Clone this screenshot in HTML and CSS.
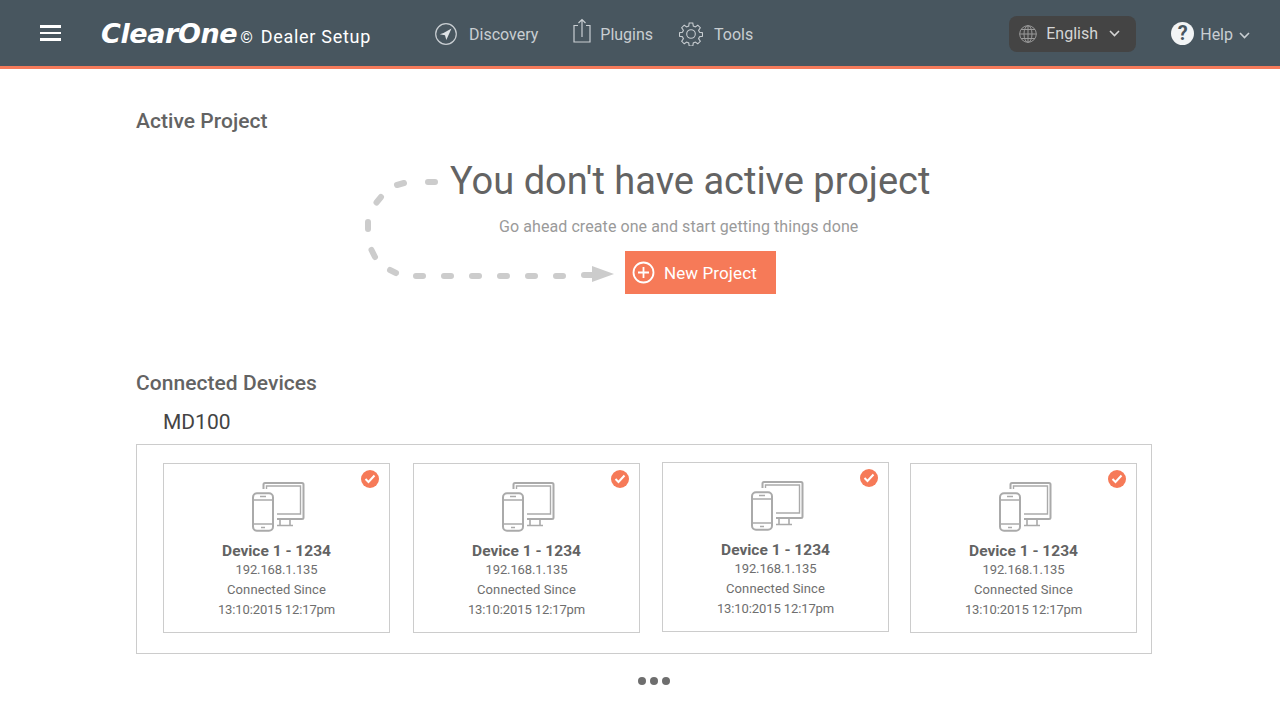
FILE: index.html
```html
<!DOCTYPE html>
<html lang="en">
<head>
<meta charset="utf-8">
<title>ClearOne Dealer Setup</title>
<link rel="stylesheet" href="styles.css">
</head>
<body>
<svg class="defs" width="0" height="0" aria-hidden="true">
  <symbol id="device" viewBox="0 0 56 52">
    <g fill="none" stroke="#aaa" stroke-width="2">
      <path d="M13.500 8V3.500a1.500 1.500 0 0 1 1.500-1.500h37a1.500 1.500 0 0 1 1.500 1.500v33a1.500 1.500 0 0 1-1.500 1.500H27"/>
      <path d="M16.500 8V5h34v28H27" stroke-width="1.400"/>
      <path d="M30 38v6M40 38v6M27 44.500h16" stroke-width="1.600"/>
      <rect x="3" y="12.200" width="20" height="37.500" rx="4"/>
      <path d="M3 19h20M3 43h20" stroke-width="1.400"/>
      <path d="M10 15.500h6M11 46.500h4" stroke-width="1.400"/>
    </g>
  </symbol>
</svg>

<header class="topbar">
  <button class="menu" type="button" aria-label="Menu"><span></span><span></span><span></span></button>
  <div class="brand"><span class="logo">ClearOne</span><span class="copy">©</span><span class="product">Dealer Setup</span></div>
  <nav class="nav">
    <a class="nav-item nav-discovery">
      <svg width="24" height="24" viewBox="0 0 24 24"><circle cx="12" cy="12" r="10.300" fill="none" stroke="#c9ced2" stroke-width="1.200"/><path d="M17.500 6.500 9.500 11 5.800 12.200 11 13.200 12.300 18z" fill="#dfe3e6"/></svg>
      <span>Discovery</span>
    </a>
    <a class="nav-item nav-plugins">
      <svg width="18" height="26" viewBox="0 0 18 26"><path d="M5 7.500H1V24h16V7.500h-4" fill="none" stroke="#c9ced2" stroke-width="1.200"/><path d="M9 1.500V19M5.500 5 9 1.500 12.500 5" fill="none" stroke="#c9ced2" stroke-width="1.200"/></svg>
      <span>Plugins</span>
    </a>
    <a class="nav-item nav-tools">
      <svg width="24" height="24" viewBox="0 0 24 24"><g fill="none" stroke="#c9ced2" stroke-width="1.100"><circle cx="12" cy="12" r="4.300"/><path d="M10.200 1h3.600l.5 3 2 .9 2.500-1.700 2.500 2.500-1.700 2.500.9 2 3 .5v3.600l-3 .5-.9 2 1.700 2.500-2.500 2.500-2.500-1.700-2 .9-.5 3h-3.600l-.5-3-2-.9-2.500 1.700-2.500-2.500 1.700-2.500-.9-2-3-.5v-3.600l3-.5.9-2-1.700-2.500 2.500-2.500 2.500 1.700 2-.9z"/></g></svg>
      <span>Tools</span>
    </a>
  </nav>
  <div class="lang">
    <svg width="18" height="18" viewBox="0 0 18 18"><g fill="none" stroke="#9a9a9a" stroke-width="1"><circle cx="9" cy="9" r="8.300"/><ellipse cx="9" cy="9" rx="4" ry="8.300"/><path d="M9 .7v16.600M.7 9h16.600M2 4.500h14M2 13.500h14"/></g></svg>
    <span>English</span>
    <svg width="11" height="7" viewBox="0 0 11 7"><path d="M1 1l4.500 4.500L10 1" fill="none" stroke="#d5d5d5" stroke-width="1.600"/></svg>
  </div>
  <div class="help">
    <span class="help-mark">?</span>
    <span class="help-label">Help</span>
    <svg width="11" height="7" viewBox="0 0 11 7"><path d="M1 1l4.500 4.500L10 1" fill="none" stroke="#c9ced2" stroke-width="1.600"/></svg>
  </div>
</header>

<main class="page">
  <h2 class="section-title">Active Project</h2>
  <section class="hero">
    <svg class="hero-arrow" width="260" height="120" viewBox="0 0 260 120">
      <g fill="none" stroke="#ccc" stroke-width="6" stroke-linecap="round">
        <path d="M68 11h7"/>
        <path d="M37 14 44 12"/>
        <path d="M16.500 31.500 21 26"/>
        <path d="M8 51v7"/>
        <path d="M11.500 79 15 86"/>
        <path d="M30 99 36 102"/>
        <path d="M56 105h7M84 105h7M112 105h7M140 105h7M168 105h7M196 105h7M224 104h8"/>
      </g>
      <path d="M232 95 254 103 232 111z" fill="#ccc"/>
    </svg>
    <h1 class="hero-title">You don't have active project</h1>
    <p class="hero-sub">Go ahead create one and start getting things done</p>
    <button class="new-project" type="button">
      <svg width="23" height="23" viewBox="0 0 23 23"><circle cx="11.500" cy="11.500" r="10" fill="none" stroke="#fff" stroke-width="1.800"/><path d="M11.500 6v11M6 11.500h11" stroke="#fff" stroke-width="1.800"/></svg>
      <span>New Project</span>
    </button>
  </section>

  <h2 class="section-title section-devices">Connected Devices</h2>
  <h3 class="group-title">MD100</h3>
  <section class="device-box">
    <article class="card">
      <span class="badge"><svg width="12" height="10" viewBox="0 0 12 10"><path d="M1.500 5 4.500 8 10.500 1.500" fill="none" stroke="#fff" stroke-width="2"/></svg></span>
      <svg class="device-icon" width="56" height="52"><use href="#device"/></svg>
      <strong>Device 1 - 1234</strong>
      <p class="tight">192.168.1.135</p>
      <p class="wide">Connected Since</p>
      <p class="tight">13:10:2015 12:17pm</p>
    </article>
    <article class="card card-2">
      <span class="badge"><svg width="12" height="10" viewBox="0 0 12 10"><path d="M1.500 5 4.500 8 10.500 1.500" fill="none" stroke="#fff" stroke-width="2"/></svg></span>
      <svg class="device-icon" width="56" height="52"><use href="#device"/></svg>
      <strong>Device 1 - 1234</strong>
      <p class="tight">192.168.1.135</p>
      <p class="wide">Connected Since</p>
      <p class="tight">13:10:2015 12:17pm</p>
    </article>
    <article class="card card-3">
      <span class="badge"><svg width="12" height="10" viewBox="0 0 12 10"><path d="M1.500 5 4.500 8 10.500 1.500" fill="none" stroke="#fff" stroke-width="2"/></svg></span>
      <svg class="device-icon" width="56" height="52"><use href="#device"/></svg>
      <strong>Device 1 - 1234</strong>
      <p class="tight">192.168.1.135</p>
      <p class="wide">Connected Since</p>
      <p class="tight">13:10:2015 12:17pm</p>
    </article>
    <article class="card card-4">
      <span class="badge"><svg width="12" height="10" viewBox="0 0 12 10"><path d="M1.500 5 4.500 8 10.500 1.500" fill="none" stroke="#fff" stroke-width="2"/></svg></span>
      <svg class="device-icon" width="56" height="52"><use href="#device"/></svg>
      <strong>Device 1 - 1234</strong>
      <p class="tight">192.168.1.135</p>
      <p class="wide">Connected Since</p>
      <p class="tight">13:10:2015 12:17pm</p>
    </article>
  </section>
  <div class="pager"><span></span><span></span><span></span></div>
</main>
</body>
</html>
```
FILE: styles.css
```css
* { box-sizing: border-box; }
html, body { margin: 0; padding: 0; height: 100%; overflow: hidden; background: #fff; }
body { font-family: Roboto, "Liberation Sans", sans-serif; color: #636363; }
.defs { display: block; height: 0; }

.topbar {
  display: flex;
  align-items: center;
  height: 69px;
  padding: 1px 0 0 40px;
  background: #48565f;
  border-bottom: 3px solid #f67a5a;
  color: #c9ced2;
  font-size: 16px;
}
.menu {
  display: flex;
  flex-direction: column;
  gap: 4px;
  width: 21px;
  margin-top: -1px;
  padding: 0;
  border: 0;
  background: none;
}
.menu span { display: block; height: 2.5px; background: #fff; }
.brand { display: flex; align-items: baseline; margin-left: 40px; width: 333px; color: #fff; }
.logo { font: italic bold 27px "DejaVu Sans", sans-serif; letter-spacing: -0.4px; }
.copy { margin-left: 3px; font-size: 16px; }
.product { margin-left: 8px; font-size: 18px; letter-spacing: 0.7px; }
.nav { display: flex; align-items: center; }
.nav-item { display: flex; align-items: center; }
.nav-item span { padding-top: 2px; }
.nav-discovery svg { margin-right: 11px; }
.nav-plugins { margin-left: 35px; }
.nav-plugins svg { margin: -6px 9px 0 0; }
.nav-tools { margin-left: 26px; }
.nav-tools svg { margin-right: 11px; }
.lang {
  display: flex;
  align-items: center;
  width: 127px;
  height: 36px;
  margin-left: auto;
  padding-left: 10px;
  border-radius: 8px;
  background: #444;
  color: #d5d5d5;
}
.lang span { margin: 0 11px 0 9px; }
.help { display: flex; align-items: center; margin: -1px 30px 0 35px; color: #c9ced2; }
.help-mark {
  display: flex;
  align-items: center;
  justify-content: center;
  width: 23px;
  height: 23px;
  margin-right: 6px;
  border-radius: 50%;
  background: #f2f4f5;
  color: #48565f;
  font-size: 20px;
  font-weight: 700;
}
.help-label { padding-top: 2px; }
.help svg { margin: 5px 0 0 6px; }

.page { display: flex; flex-direction: column; padding: 0 128px 0 136px; }
.section-title { margin: 40px 0 0; font-size: 21px; line-height: 24px; font-weight: 500; letter-spacing: 0.05px; color: #636363; }
.hero { position: relative; height: 238px; }
.hero-arrow { position: absolute; left: 224px; top: 38px; }
.hero-title { margin: 23px 0 0 314px; font-size: 38px; line-height: 50px; font-weight: 400; color: #636363; white-space: nowrap; }
.hero-sub { margin: 10px 0 0 363px; font-size: 16px; line-height: 22px; letter-spacing: 0.08px; color: #9a9a9a; }
.new-project {
  display: flex;
  align-items: center;
  width: 151px;
  height: 43px;
  margin: 13px 0 0 489px;
  padding: 0 0 0 7px;
  border: 0;
  background: #f67a58;
  color: #fff;
  font: 400 17px Roboto, sans-serif;
  letter-spacing: 0.1px;
}
.new-project span { margin-left: 9px; }
.section-devices { margin-top: 0; }
.group-title { margin: 15px 0 0 27px; font-size: 21px; line-height: 24px; font-weight: 400; color: #444; }
.device-box {
  display: flex;
  align-items: flex-start;
  height: 210px;
  margin-top: 10px;
  padding: 18px 0 0 26px;
  border: 1px solid #ccc;
}
.card {
  position: relative;
  display: flex;
  flex-direction: column;
  align-items: center;
  width: 227px;
  height: 170px;
  padding-top: 17px;
  border: 1px solid #ccc;
  font-size: 13px;
  line-height: 20px;
  color: #6e6e6e;
}
.card-2 { margin-left: 23px; }
.card-3 { margin: -1px 0 0 22px; }
.card-4 { margin-left: 21px; }
.card strong { margin-top: 8px; font-size: 15.5px; line-height: 20px; font-weight: 700; color: #636363; }
.card p { margin: 0; }
.card p:first-of-type { margin-top: -1px; }
.card .tight { letter-spacing: -0.1px; }
.card .wide { letter-spacing: 0.1px; }
.device-icon { display: block; margin-left: 2px; }
.badge {
  position: absolute;
  top: 5.5px;
  right: 10.5px;
  display: flex;
  align-items: center;
  justify-content: center;
  width: 18px;
  height: 18px;
  border-radius: 50%;
  background: #f67a58;
}
.pager { display: flex; justify-content: center; gap: 4px; margin: 23px 0 0 20px; }
.pager span { width: 8px; height: 8px; border-radius: 50%; background: #6e6e6e; }
```
